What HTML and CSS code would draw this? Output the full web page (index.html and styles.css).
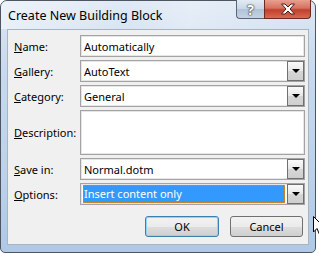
FILE: index.html
```html
<!DOCTYPE html>
<html lang="en">
<head>
  <meta charset="UTF-8" />
  <title>Create New Building Block</title>
  <link rel="stylesheet" href="styles.css">
</head>
<body>
  <div class="window">
    <div class="titlebar">
      <span class="title">Create New Building Block</span>
      <div class="caption-buttons">
        <div class="cap help">?</div>
        <div class="cap close">
          <svg width="16" height="12" viewBox="0 0 16 12">
            <path d="M1.5 1 L5 1 L8 4 L11 1 L14.5 1 L10 6 L14.5 11 L11 11 L8 8 L5 11 L1.5 11 L6 6 Z" fill="#fff" stroke="#4a2020" stroke-width="1"/>
          </svg>
        </div>
      </div>
    </div>
    <div class="client">
      <div class="form">
        <label class="lbl"><u>N</u>ame:</label>
        <div class="box"><span class="val">Automatically</span></div>

        <label class="lbl"><u>G</u>allery:</label>
        <div class="box combo"><span class="val">AutoText</span><span class="drop"></span></div>

        <label class="lbl"><u>C</u>ategory:</label>
        <div class="box combo"><span class="val">General</span><span class="drop"></span></div>

        <label class="lbl"><u>D</u>escription:</label>
        <div class="box memo"></div>

        <label class="lbl"><u>S</u>ave in:</label>
        <div class="box combo"><span class="val">Normal.dotm</span><span class="drop"></span></div>

        <label class="lbl"><u>O</u>ptions:</label>
        <div class="box combo"><span class="val selected">Insert content only</span><span class="drop"></span></div>
      </div>
      <div class="actions">
        <div class="btn default">OK</div>
        <div class="btn">Cancel</div>
      </div>
    </div>
  </div>
  <svg class="cursor" width="12" height="20" viewBox="0 0 12 20">
    <path d="M0.5 0.5 L0.5 16 L4 12.5 L6.5 18.5 L9 17.5 L6.5 11.5 L11.5 11.5 Z" fill="#fff" stroke="#000" stroke-width="1"/>
  </svg>
</body>
</html>
```

FILE: styles.css
```css
body { margin: 0; background: #fff; font-family: "Noto Sans", "Open Sans", sans-serif; font-size: 11px; color: #000; }
.window { position: relative; width: 316px; height: 253px; box-sizing: border-box; border: 1px solid #4d5660; border-radius: 7px 7px 5px 5px; padding: 0 6px 7px 6px; background: linear-gradient(to bottom, #dce7f4 0%, #c6d9ee 30%, #bcd2ea 70%, #aec8e6 100%); display: flex; flex-direction: column; }
.titlebar { height: 28px; margin: 0 -6px; display: flex; justify-content: space-between; align-items: flex-start; background: linear-gradient(100deg, rgba(255,255,255,0.5) 0%, rgba(255,255,255,0.1) 40%, rgba(255,255,255,0.3) 60%, rgba(255,255,255,0) 100%); border-radius: 6px 6px 0 0; }
.title { padding: 6px 0 0 7px; font-size: 12.5px; color: #000; }
.caption-buttons { display: flex; margin-right: 4px; margin-top: -1px; }
.cap { height: 19px; box-sizing: border-box; border: 1px solid #5a6575; border-top: none; display: flex; align-items: center; justify-content: center; }
.help { width: 28px; border-radius: 0 0 0 4px; border-right: none; background: linear-gradient(to bottom, #e3ebf4 0%, #c9d6e5 50%, #b2c3d8 51%, #c4d3e4 100%); color: #fff; font-weight: bold; font-size: 14px; text-shadow: 0 0 1px #333, 0 0 1px #333, 0 0 2px #555; }
.close { width: 47px; border-radius: 0 0 4px 0; border-color: #6b2a22; background: linear-gradient(to bottom, #e8a090 0%, #d6705e 45%, #c0402e 55%, #d86a50 100%); }
.client { flex: 1; background: #f0f0f0; border: 1px solid #a9b4c1; padding: 5px 3px 0 6px; }
.form { display: grid; grid-template-columns: 66px 225px; grid-template-rows: 22px 22px 22px 45px 22px 22px; row-gap: 3px; }
.lbl { display: flex; align-items: center; }
.box { box-sizing: border-box; background: #fff; border: 1px solid #a3a3a3; box-shadow: inset 0 0 0 1px #e6e6e6; display: flex; align-items: center; padding-left: 2px; }
.val { flex: 1; padding: 1px 1px; white-space: nowrap; }
.selected { margin-right: 2px; padding: 1px 1px 2px; background: #3399ff; color: #fff; outline: 1px dotted #c88a3a; outline-offset: -1px; }
.drop { width: 17px; height: 20px; box-sizing: border-box; border: 1px solid #707070; background: linear-gradient(to bottom, #fafafa 0%, #e8e8e8 50%, #d6d6d6 51%, #cfcfcf 100%); position: relative; }
.drop::after { content: ""; position: absolute; left: 4px; top: 7px; border-left: 4px solid transparent; border-right: 4px solid transparent; border-top: 4px solid #000; }
.actions { display: flex; justify-content: flex-end; gap: 11px; margin-top: 11px; margin-right: 2px; }
.btn { width: 73px; height: 21px; box-sizing: border-box; border: 1px solid #707070; border-radius: 3px; background: linear-gradient(to bottom, #f2f2f2 0%, #ebebeb 50%, #dddddd 51%, #cfcfcf 100%); display: flex; align-items: center; justify-content: center; }
.btn.default { width: 74px; border-color: #3c7fb1; box-shadow: inset 0 0 0 1px #8fd4f4; }
.cursor { position: absolute; left: 313px; top: 216px; }
```
